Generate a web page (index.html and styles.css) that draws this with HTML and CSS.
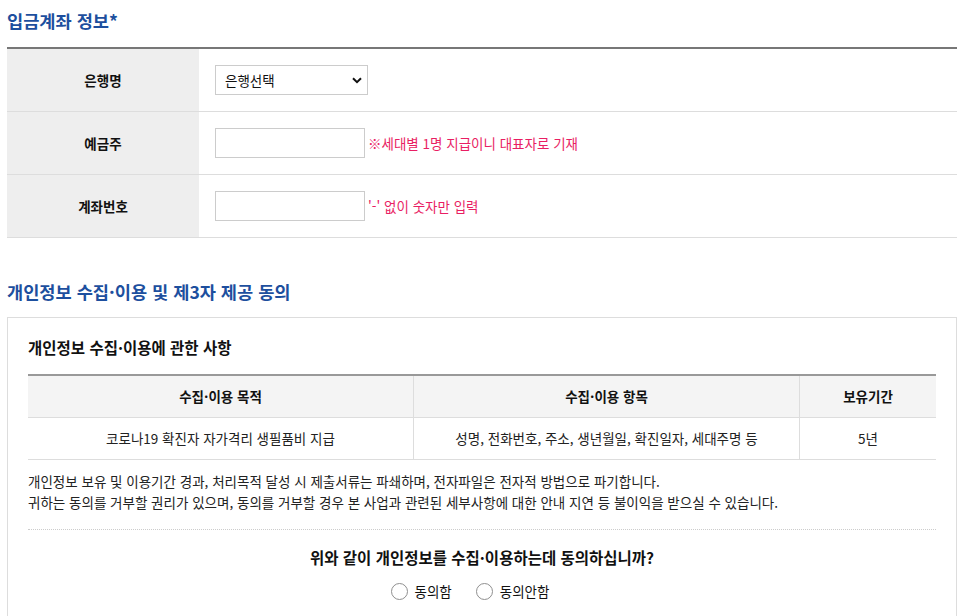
FILE: index.html
```html
<!DOCTYPE html>
<html lang="ko">
<head>
<meta charset="utf-8">
<title>입금계좌 정보</title>
<link rel="stylesheet" href="styles.css">
</head>
<body>
<div class="page">
  <h2 class="sec-title">입금계좌 정보*</h2>
  <div class="form-table">
    <div class="row">
      <div class="label">은행명</div>
      <div class="field">
        <div class="select-wrap">
          <select class="select"><option>은행선택</option></select>
          <svg class="chev" width="10" height="7" viewBox="0 0 10 7"><path d="M1 1.2l4 4 4-4" fill="none" stroke="#111" stroke-width="2"/></svg>
        </div>
      </div>
    </div>
    <div class="row">
      <div class="label">예금주</div>
      <div class="field">
        <input class="input" type="text">
        <span class="hint">※세대별 1명 지급이니 대표자로 기재</span>
      </div>
    </div>
    <div class="row">
      <div class="label">계좌번호</div>
      <div class="field">
        <input class="input" type="text">
        <span class="hint">'-' 없이 숫자만 입력</span>
      </div>
    </div>
  </div>

  <h2 class="sec-title sec-title--second">개인정보 수집·이용 및 제3자 제공 동의</h2>
  <div class="agree-box">
    <h3 class="sub-title">개인정보 수집·이용에 관한 사항</h3>
    <table class="info-table">
      <colgroup><col class="c1"><col class="c2"><col class="c3"></colgroup>
      <thead>
        <tr><th>수집·이용 목적</th><th>수집·이용 항목</th><th>보유기간</th></tr>
      </thead>
      <tbody>
        <tr><td>코로나19 확진자 자가격리 생필품비 지급</td><td>성명, 전화번호, 주소, 생년월일, 확진일자, 세대주명 등</td><td>5년</td></tr>
      </tbody>
    </table>
    <p class="notice">개인정보 보유 및 이용기간 경과, 처리목적 달성 시 제출서류는 파쇄하며, 전자파일은 전자적 방법으로 파기합니다.<br>귀하는 동의를 거부할 권리가 있으며, 동의를 거부할 경우 본 사업과 관련된 세부사항에 대한 안내 지연 등 불이익을 받으실 수 있습니다.</p>
    <div class="question">위와 같이 개인정보를 수집·이용하는데 동의하십니까?</div>
    <div class="radios">
      <label class="radio"><input type="radio" name="agree"><span>동의함</span></label>
      <label class="radio"><input type="radio" name="agree"><span>동의안함</span></label>
    </div>
  </div>
</div>
</body>
</html>
```
FILE: styles.css
```css
* { box-sizing: border-box; }
html, body { margin: 0; padding: 0; background: #fff; }
body {
  font-family: "Noto Sans CJK KR", "Noto Sans", sans-serif;
  font-size: 13.5px;
  color: #222;
}
.page { padding: 9px 6px 0 7px; }

.sec-title {
  margin: 0 0 14px;
  font-size: 17.6px;
  line-height: 24px;
  font-weight: 700;
  color: #1d4f9e;
}
.sec-title--second { margin-top: 42px; margin-bottom: 13px; }

.form-table { border-top: 2px solid #777; }
.row {
  display: flex;
  height: 63px;
  border-bottom: 1px solid #ddd;
}
.label {
  width: 192px;
  flex: none;
  background: #eee;
  display: flex;
  align-items: center;
  justify-content: center;
  font-weight: 700;
  color: #111;
}
.field {
  flex: 1;
  display: flex;
  align-items: center;
  padding-left: 16px;
  gap: 3px;
}
.select-wrap { position: relative; width: 153px; height: 30px; }
.select {
  appearance: none;
  -webkit-appearance: none;
  width: 153px;
  height: 30px;
  border: 1px solid #ccc;
  border-radius: 0;
  background: #fff;
  padding: 0 9px;
  font-family: inherit;
  font-size: 13.5px;
  color: #111;
}
.chev { position: absolute; right: 6px; top: 12px; pointer-events: none; }
.input {
  width: 150px;
  height: 30px;
  border: 1px solid #ccc;
  border-radius: 0;
  padding: 0 6px;
  font-family: inherit;
  font-size: 13.5px;
}
.hint { color: #e91e63; }

.agree-box {
  border: 1px solid #ddd;
  padding: 18px 20px 30px;
}
.sub-title {
  margin: 0 0 16px;
  font-size: 15.5px;
  line-height: 22px;
  font-weight: 700;
  color: #111;
}
.info-table {
  width: 100%;
  table-layout: fixed;
  border-collapse: separate;
  border-spacing: 0;
  border-top: 2px solid #999;
}
.info-table .c1 { width: 386px; }
.info-table .c2 { width: 386px; }
.info-table th, .info-table td {
  padding: 0;
  line-height: 41px;
  text-align: center;
  border-bottom: 1px solid #ddd;
}
.info-table th:not(:last-child), .info-table td:not(:last-child) { border-right: 1px solid #ddd; }
.info-table th { background: #f4f4f4; font-weight: 700; color: #111; }
.info-table td { color: #222; }

.notice {
  margin: 11px 0 0;
  line-height: 21px;
  color: #222;
}
.question {
  margin-top: 16px;
  border-top: 1px dotted #ccc;
  padding-top: 16px;
  text-align: center;
  font-size: 15.5px;
  line-height: 22px;
  font-weight: 700;
  color: #111;
}
.radios {
  margin-top: 11px;
  display: flex;
  justify-content: center;
  height: 24px;
}
.radio {
  display: flex;
  align-items: center;
  gap: 7px;
  margin-right: 24px;
  color: #111;
}
.radio input {
  appearance: none;
  -webkit-appearance: none;
  margin: 0;
  width: 17px;
  height: 17px;
  border: 1px solid #8f8f8f;
  border-radius: 50%;
  background: #fff;
}
```
